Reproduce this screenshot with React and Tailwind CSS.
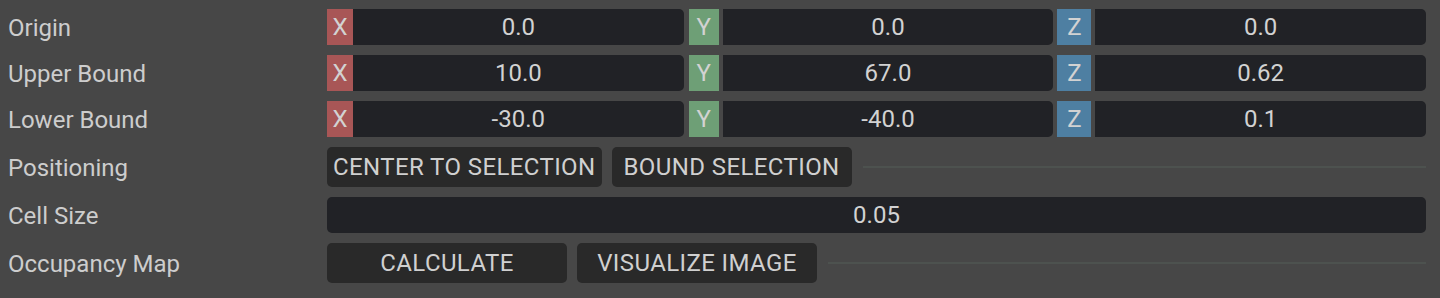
import React from "react";

const axisStyles = {
    X: "bg-[#a85656] w-[26px]",
    Y: "bg-[#6e9f76] w-[30px] ml-[5px]",
    Z: "bg-[#4e7fa2] w-[34px] ml-[4px]",
};

const vectorRows = [
    { label: "Origin", values: ["0.0", "0.0", "0.0"] },
    { label: "Upper Bound", values: ["10.0", "67.0", "0.62"] },
    { label: "Lower Bound", values: ["-30.0", "-40.0", "0.1"] },
];

const RowLabel = ({ children }) => (
    <div className="pl-2 pt-[2px] text-[24px] text-[#cdcdcd] leading-none">{children}</div>
);

const AxisField = ({ axis, value }) => (
    <>
        <div
            className={`${axisStyles[axis]} h-[36px] flex items-center justify-center text-[24px] text-[#d2d2d2] shrink-0`}
        >
            {axis}
        </div>
        <div
            className={`${axis === "X" ? "" : "ml-[4px]"} flex-1 h-[36px] bg-[#212226] rounded-r-[5px] flex items-center justify-center text-[24px] text-[#d2d2d2]`}
        >
            {value}
        </div>
    </>
);

const Button = ({ children }) => (
    <button className="h-[40px] min-w-[240px] px-[6px] bg-[#292929] rounded-[5px] text-[24px] tracking-[0.4px] text-[#d0d0d0] flex items-center justify-center whitespace-nowrap">
        {children}
    </button>
);

const Separator = () => <div className="flex-1 ml-[1px] h-[2px] bg-[#4d524f]" />;

const App = () => {
    return (
        <div
            className="w-[1440px] h-[298px] bg-[#474747] pt-[9px] pr-[14px]"
            style={{ fontFamily: 'Roboto, "Noto Sans", sans-serif' }}
        >
            <div className="grid grid-cols-[327px_1fr] items-center gap-y-[10px]">
                {vectorRows.map((row) => (
                    <React.Fragment key={row.label}>
                        <RowLabel>{row.label}</RowLabel>
                        <div className="flex items-center">
                            <AxisField axis="X" value={row.values[0]} />
                            <AxisField axis="Y" value={row.values[1]} />
                            <AxisField axis="Z" value={row.values[2]} />
                        </div>
                    </React.Fragment>
                ))}

                <RowLabel>Positioning</RowLabel>
                <div className="flex items-center gap-[10px]">
                    <Button>CENTER TO SELECTION</Button>
                    <Button>BOUND SELECTION</Button>
                    <Separator />
                </div>

                <RowLabel>Cell Size</RowLabel>
                <div className="h-[36px] bg-[#212226] rounded-[5px] flex items-center justify-center text-[24px] text-[#d2d2d2]">
                    0.05
                </div>

                <RowLabel>Occupancy Map</RowLabel>
                <div className="flex items-center gap-[10px]">
                    <Button>CALCULATE</Button>
                    <Button>VISUALIZE IMAGE</Button>
                    <Separator />
                </div>
            </div>
        </div>
    );
};

export default App;
